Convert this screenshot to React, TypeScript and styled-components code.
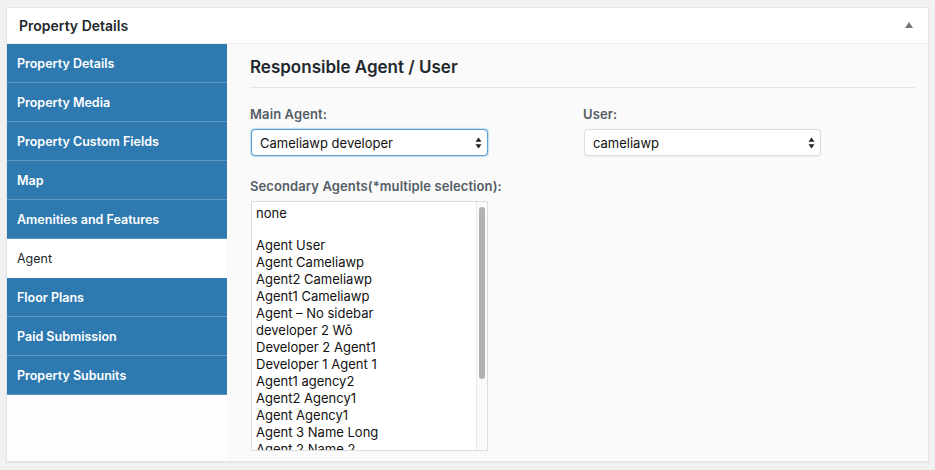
import styled, { createGlobalStyle } from "styled-components";

const GlobalStyle = createGlobalStyle`
  html, body {
    margin: 0;
    padding: 0;
    background: #f1f1f1;
  }
  body {
    font-family: Inter, "Liberation Sans", Arial, sans-serif;
    color: #23282d;
  }
`;

const tabs = [
  "Property Details",
  "Property Media",
  "Property Custom Fields",
  "Map",
  "Amenities and Features",
  "Agent",
  "Floor Plans",
  "Paid Submission",
  "Property Subunits",
];

const agents = [
  "none",
  "",
  "Agent User",
  "Agent Cameliawp",
  "Agent2 Cameliawp",
  "Agent1 Cameliawp",
  "Agent – No sidebar",
  "developer 2 Wǒ",
  "Developer 2 Agent1",
  "Developer 1 Agent 1",
  "Agent1 agency2",
  "Agent2 Agency1",
  "Agent Agency1",
  "Agent 3 Name Long",
  "Agent 2 Name 2",
];

const SelectArrows = () => (
  <svg width="7" height="12" viewBox="0 0 7 12">
    <path d="M3.5 0.5 L6.5 4.8 L0.5 4.8 Z" fill="#222" />
    <path d="M3.5 11.5 L6.5 7.2 L0.5 7.2 Z" fill="#222" />
  </svg>
);

export default function App() {
  return (
    <>
      <GlobalStyle />
      <Page>
        <Panel>
          <Header>
            <HeaderTitle>Property Details</HeaderTitle>
            <Toggle>
              <svg width="8" height="6" viewBox="0 0 8 6">
                <path d="M4 0 L8 6 L0 6 Z" fill="#72777c" />
              </svg>
            </Toggle>
          </Header>
          <Body>
            <Sidebar>
              {tabs.map((t) => (
                <Tab key={t} $active={t === "Agent"}>
                  {t}
                </Tab>
              ))}
            </Sidebar>
            <Content>
              <Heading>Responsible Agent / User</Heading>
              <Fields>
                <Field>
                  <Label>Main Agent:</Label>
                  <Select $focused>
                    <span>Cameliawp developer</span>
                    <SelectArrows />
                  </Select>
                </Field>
                <Field>
                  <Label>User:</Label>
                  <Select>
                    <span>cameliawp</span>
                    <SelectArrows />
                  </Select>
                </Field>
              </Fields>
              <Label>Secondary Agents(*multiple selection):</Label>
              <ListBox>
                <Options>
                  {agents.map((a, i) => (
                    <Option key={i} $blank={a === ""}>
                      {a}
                    </Option>
                  ))}
                </Options>
                <ScrollTrack>
                  <ScrollThumb />
                </ScrollTrack>
              </ListBox>
            </Content>
          </Body>
        </Panel>
      </Page>
    </>
  );
}

//>>>>StyledComponents<<<<\\

const Page = styled.div`
  padding: 7px 6px 8px 6px;
  height: 470px;
  box-sizing: border-box;
`;

const Panel = styled.div`
  background: #fff;
  border: 1px solid #e5e5e5;
  box-shadow: 0 1px 1px rgba(0, 0, 0, 0.04);
  height: 100%;
  box-sizing: border-box;
  display: flex;
  flex-direction: column;
  overflow: hidden;
`;

const Header = styled.div`
  height: 35px;
  border-bottom: 1px solid #eee;
  display: flex;
  align-items: center;
  justify-content: space-between;
  padding: 0 15px 0 12px;
  flex-shrink: 0;
`;

const HeaderTitle = styled.h2`
  margin: 0;
  font-size: 14px;
  font-weight: 600;
  color: #23282d;
`;

const Toggle = styled.span`
  display: flex;
  align-items: center;
  margin-top: -2px;
`;

const Body = styled.div`
  flex: 1;
  display: flex;
  min-height: 0;
`;

const Sidebar = styled.ul`
  width: 220px;
  margin: 0;
  padding: 0;
  list-style: none;
  background: #fdfdfd;
  flex-shrink: 0;
`;

const Tab = styled.li<{ $active?: boolean }>`
  height: 38px;
  border-bottom: 1px solid ${(p) => (p.$active ? "#fff" : "#5b97c3")};
  background: ${(p) => (p.$active ? "#fff" : "#2e7ab0")};
  color: ${(p) => (p.$active ? "#23282d" : "#fff")};
  font-size: 12.5px;
  font-weight: ${(p) => (p.$active ? 400 : 600)};
  padding-left: 10px;
  display: flex;
  align-items: center;
`;

const Content = styled.div`
  flex: 1;
  background: #fafafa;
  padding: 0 13px 0 23px;
  min-width: 0;
  overflow: hidden;
`;

const Heading = styled.h3`
  margin: 13px 0 0;
  padding-bottom: 10px;
  border-bottom: 1px solid #e5e5e5;
  font-size: 17px;
  line-height: 20px;
  font-weight: 600;
  color: #23282d;
`;

const Fields = styled.div`
  display: grid;
  grid-template-columns: 333px 1fr;
  margin-top: 18px;
  margin-bottom: 22px;
`;

const Field = styled.div`
  display: flex;
  flex-direction: column;
`;

const Label = styled.div`
  font-size: 13px;
  line-height: 16px;
  font-weight: 600;
  color: #555d66;
  letter-spacing: 0.1px;
  margin-bottom: 7px;
`;

const Select = styled.div<{ $focused?: boolean }>`
  width: 237px;
  height: 27px;
  box-sizing: border-box;
  margin-left: 1px;
  border: 1px solid ${(p) => (p.$focused ? "#5b9dd9" : "#ddd")};
  box-shadow: ${(p) =>
    p.$focused ? "0 0 2px rgba(30, 140, 190, 0.8)" : "0 1px 2px rgba(0,0,0,0.07)"};
  border-radius: 4px;
  background: #fff;
  display: flex;
  align-items: center;
  justify-content: space-between;
  padding: 0 5px 0 8px;
  font-size: 13px;
  color: #111;
`;

const ListBox = styled.div`
  width: 237px;
  height: 250px;
  box-sizing: border-box;
  margin-left: 1px;
  border: 1px solid #ddd;
  background: #fff;
  display: flex;
`;

const Options = styled.div`
  flex: 1;
  overflow: hidden;
  padding: 3px 0 0 4px;
`;

const Option = styled.div<{ $blank?: boolean }>`
  font-size: 13px;
  line-height: 17px;
  height: ${(p) => (p.$blank ? "15px" : "17px")};
  color: #111;
  white-space: nowrap;
`;

const ScrollTrack = styled.div`
  width: 11px;
  border-left: 1px solid #e8e8e8;
  background: #fafafa;
  padding: 5px 0 0 2px;
  box-sizing: border-box;
`;

const ScrollThumb = styled.div`
  width: 6px;
  height: 172px;
  border-radius: 3px;
  background: #b1b1b1;
`;
